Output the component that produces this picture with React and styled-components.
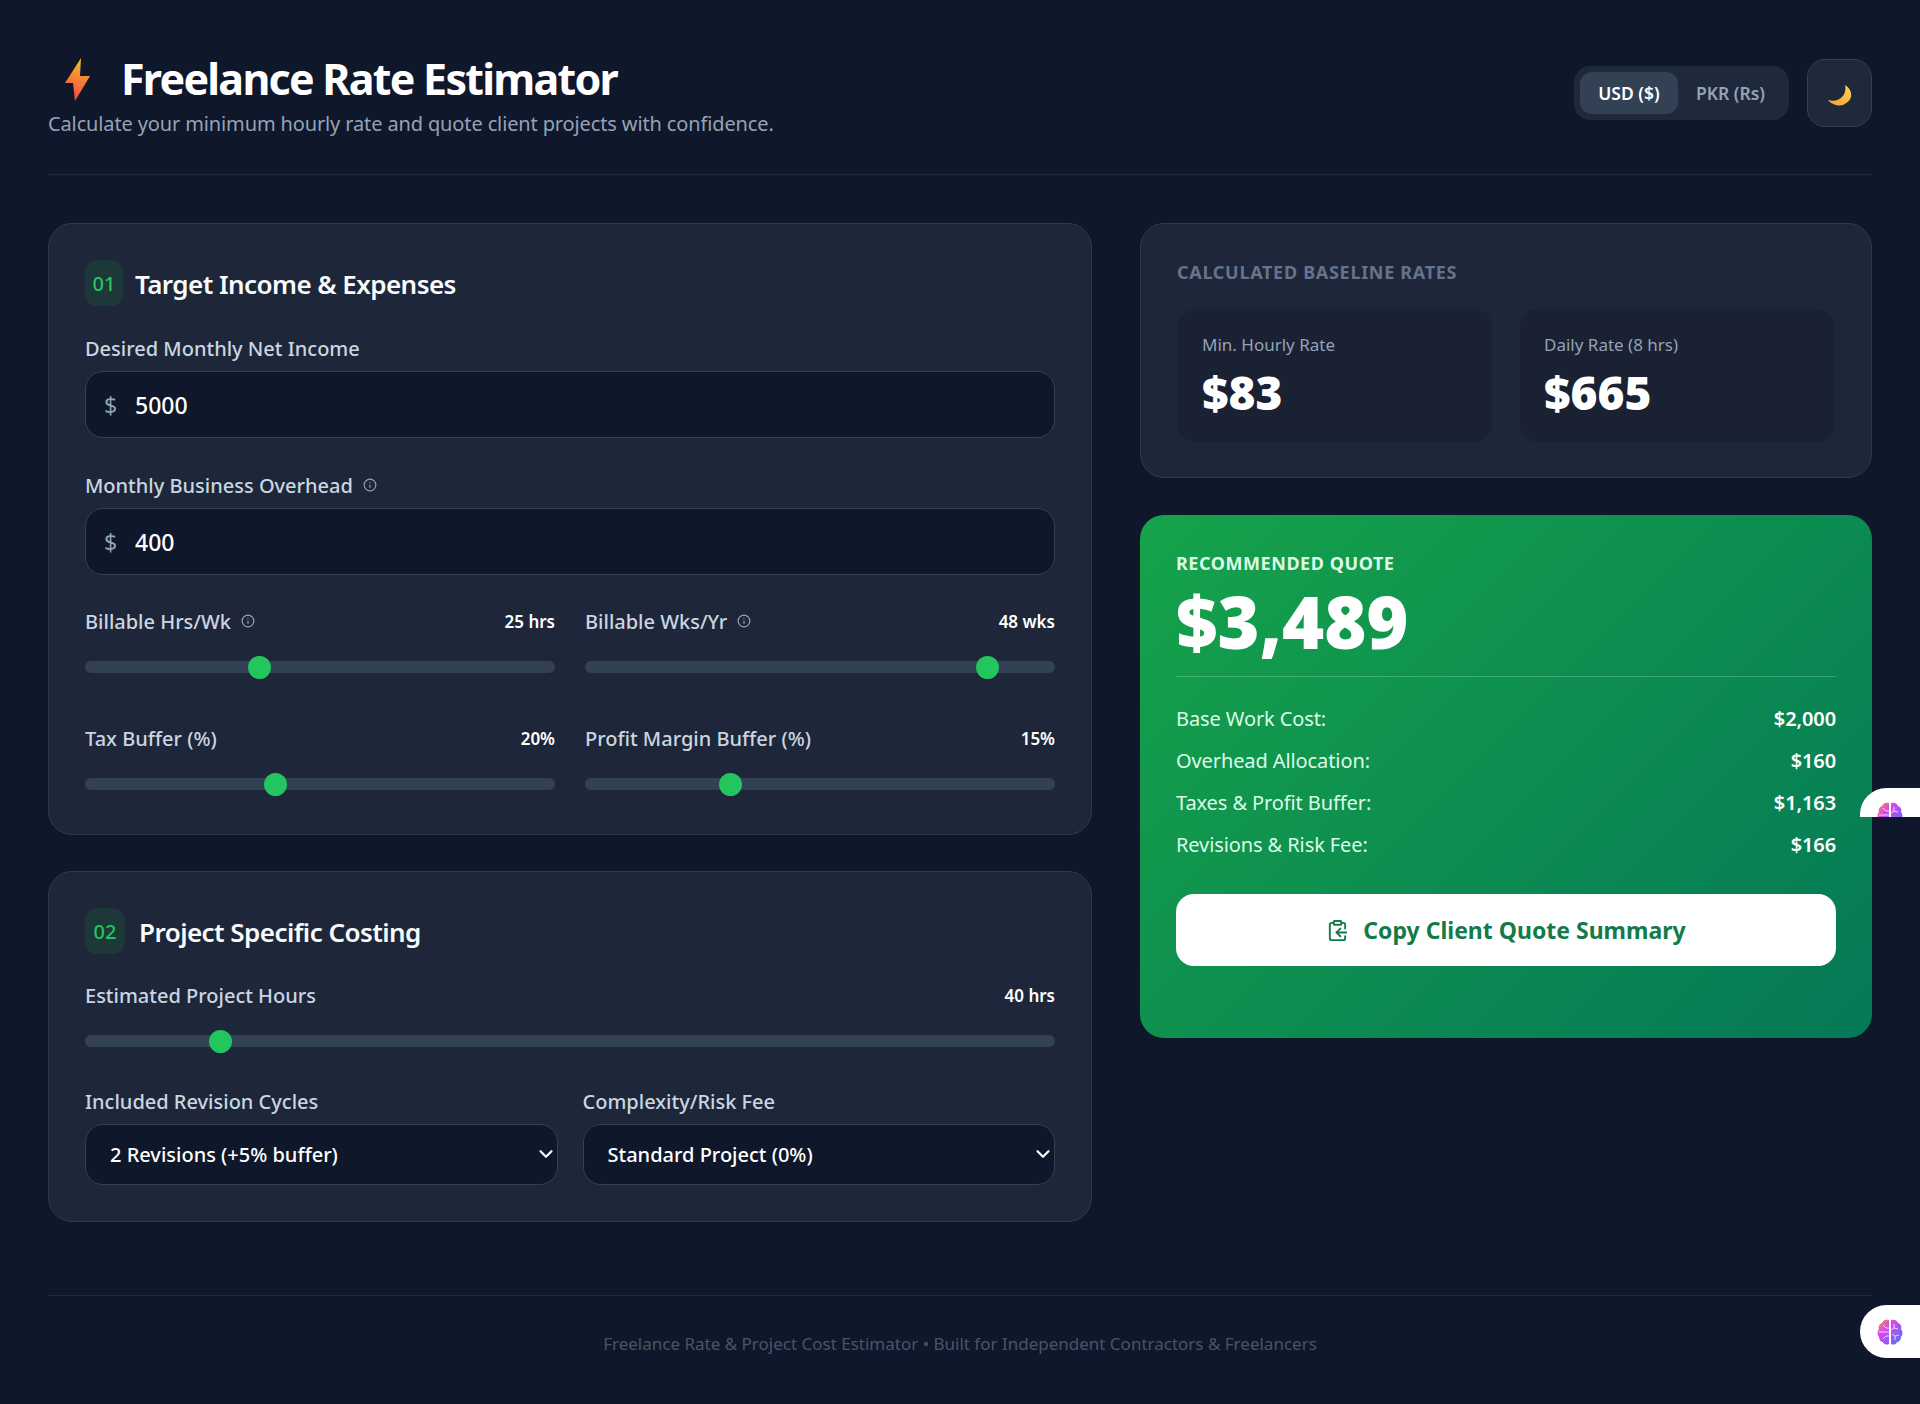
import React, { useState } from "react";
import styled, { createGlobalStyle } from "styled-components";
import { ClipboardCopy, Info, ChevronDown } from "lucide-react";

const GlobalStyle = createGlobalStyle`
  * { box-sizing: border-box; }
  body {
    margin: 0;
    background: #0f172a;
    color: #f8fafc;
    font-family: "Noto Sans", "Open Sans", sans-serif;
  }
`;

const Page = styled.div`
  position: relative;
  height: 1404px;
  padding: 48px 48px 0;
  overflow: hidden;
`;

const Header = styled.header`
  display: flex;
  justify-content: space-between;
  align-items: center;
  height: 127px;
  padding-bottom: 36px;
  border-bottom: 1px solid #1e293b;
  margin-bottom: 48px;
`;

const TitleRow = styled.div`
  display: flex;
  align-items: center;
  gap: 31px;
  padding-left: 17px;
  height: 60px;
`;

const Title = styled.h1`
  margin: -2px 0 0;
  font-size: 43px;
  font-weight: 700;
  letter-spacing: -1.75px;
  color: #fff;
`;

const Subtitle = styled.p`
  margin: 0;
  font-size: 20px;
  letter-spacing: -0.13px;
  color: #94a3b8;
`;

const Controls = styled.div`
  display: flex;
  align-items: center;
  gap: 18px;
`;

const Toggle = styled.div`
  display: flex;
  padding: 6px;
  height: 54px;
  border-radius: 16px;
  background: #1e293b;
`;

const ToggleBtn = styled.button`
  border: none;
  border-radius: 12px;
  height: 42px;
  width: ${(props) => (props.active ? "98px" : "105px")};
  font: 600 17.5px "Noto Sans", sans-serif;
  color: ${(props) => (props.active ? "#fff" : "#94a3b8")};
  background: ${(props) => (props.active ? "#334155" : "transparent")};
  cursor: pointer;
`;

const ThemeBtn = styled.button`
  width: 65px;
  height: 68px;
  display: flex;
  align-items: center;
  justify-content: center;
  padding: 5px 0 0;
  border-radius: 18px;
  border: 1px solid #334155;
  background: #1e293b;
  cursor: pointer;
`;

const Grid = styled.main`
  display: grid;
  grid-template-columns: 1044px 732px;
  justify-content: space-between;
  align-items: start;
`;

const Column = styled.div`
  display: flex;
  flex-direction: column;
  gap: ${(props) => props.gap}px;
`;

const Card = styled.section`
  height: ${(props) => props.h}px;
  padding: 36px;
  border-radius: 24px;
  background: #1d2739;
  border: 1px solid #2e3a4e;
`;

const CardHead = styled.div`
  display: flex;
  align-items: center;
  gap: ${(props) => props.gap || 12}px;
  height: 46px;
  margin-bottom: ${(props) => props.mb}px;
`;

const Badge = styled.span`
  display: flex;
  align-items: center;
  justify-content: center;
  width: ${(props) => props.w || 38}px;
  height: 46px;
  border-radius: 12px;
  background: #1c3838;
  color: #22c55e;
  font-size: 20px;
  font-weight: 500;
`;

const CardTitle = styled.h2`
  margin: 0;
  padding-top: 2px;
  font-size: 26px;
  font-weight: 600;
  letter-spacing: -0.55px;
  color: #f8fafc;
`;

const Field = styled.div`
  margin-bottom: ${(props) => props.mb || 0}px;
`;

const LabelRow = styled.div`
  display: flex;
  justify-content: space-between;
  align-items: center;
  height: 28px;
  margin-bottom: ${(props) => props.mb || 9}px;
`;

const Label = styled.label`
  display: flex;
  align-items: center;
  gap: 10px;
  font-size: 20px;
  font-weight: 500;
  color: #cbd5e1;
`;

const InfoIcon = styled(Info)`
  width: 14px;
  height: 14px;
  color: #94a3b8;
`;

const ValueText = styled.span`
  font-size: 17px;
  font-weight: 600;
  color: #fff;
`;

const InputBox = styled.div`
  display: flex;
  align-items: center;
  height: 67px;
  padding: 0 18px;
  border-radius: 18px;
  border: 1px solid #334155;
  background: #0f172a;
`;

const Prefix = styled.span`
  width: 29px;
  font-size: 23px;
  color: #94a3b8;
`;

const NumberInput = styled.input`
  flex: 1;
  border: none;
  outline: none;
  background: transparent;
  font: 500 23px "Noto Sans", sans-serif;
  color: #fff;
`;

const SliderGrid = styled.div`
  display: grid;
  grid-template-columns: 1fr 1fr;
  column-gap: 30px;
  row-gap: 45px;
`;

const Range = styled.input.attrs({ type: "range" })`
  display: block;
  width: 100%;
  height: 24px;
  margin: 0;
  appearance: none;
  background: transparent;
  &::-webkit-slider-runnable-track {
    height: 12px;
    border-radius: 6px;
    background: #334155;
  }
  &::-webkit-slider-thumb {
    appearance: none;
    width: 23px;
    height: 23px;
    margin-top: -5.5px;
    border-radius: 50%;
    background: #22c55e;
  }
`;

const SelectGrid = styled.div`
  display: grid;
  grid-template-columns: 1fr 1fr;
  column-gap: 25px;
  margin-top: 34px;
`;

const SelectBox = styled.div`
  position: relative;
`;

const Select = styled.select`
  display: block;
  width: 100%;
  height: 61px;
  padding: 0 24px;
  appearance: none;
  border-radius: 18px;
  border: 1px solid #334155;
  background: #0f172a;
  color: #fff;
  font: 500 20px "Noto Sans", sans-serif;
`;

const Chevron = styled(ChevronDown)`
  position: absolute;
  right: 1px;
  top: 19px;
  width: 22px;
  height: 22px;
  stroke-width: 2.4;
  color: #fff;
  pointer-events: none;
`;

const MutedHeading = styled.h3`
  margin: -1px 0 23px;
  height: 27px;
  line-height: 27px;
  font-size: 18px;
  font-weight: 700;
  letter-spacing: 0.7px;
  color: #64748b;
  text-transform: uppercase;
`;

const RateGrid = styled.div`
  display: grid;
  grid-template-columns: 1fr 1fr;
  gap: 28px;
  margin: 0 1px;
`;

const RateBox = styled.div`
  height: 133px;
  padding: 22px 24px;
  border-radius: 18px;
  background: #192133;
`;

const RateLabel = styled.div`
  font-size: 17px;
  color: #94a3b8;
  height: 28px;
  line-height: 28px;
`;

const RateValue = styled.div`
  margin-top: 3px;
  font-size: 46px;
  font-weight: 900;
  line-height: 60px;
  color: #fff;
`;

const QuoteCard = styled.section`
  height: 523px;
  padding: 36px;
  border-radius: 24px;
  background: linear-gradient(135deg, #16a34a, #047857);
`;

const QuoteLabel = styled.div`
  height: 24px;
  line-height: 24px;
  font-size: 18px;
  font-weight: 700;
  letter-spacing: 0.55px;
  color: #dcfce7;
  text-transform: uppercase;
`;

const QuoteValue = styled.div`
  height: 102px;
  line-height: 92px;
  padding-bottom: 18px;
  font-size: 72px;
  font-weight: 900;
  color: #fff;
  border-bottom: 1px solid rgba(255, 255, 255, 0.2);
`;

const Breakdown = styled.div`
  display: flex;
  flex-direction: column;
  gap: 14px;
  margin-top: 28px;
`;

const BreakRow = styled.div`
  display: flex;
  justify-content: space-between;
  height: 28px;
  line-height: 28px;
  font-size: 20px;
  letter-spacing: -0.1px;
  color: #dcfce7;
`;

const BreakValue = styled.span`
  font-weight: 600;
  color: #fff;
`;

const CopyBtn = styled.button`
  display: flex;
  align-items: center;
  justify-content: center;
  gap: 14px;
  width: 100%;
  height: 72px;
  margin-top: 35px;
  border: none;
  border-radius: 18px;
  background: #fff;
  color: #137a4a;
  font: 700 23px "Noto Sans", sans-serif;
  cursor: pointer;
`;

const Footer = styled.footer`
  margin-top: 73px;
  padding-top: 36px;
  border-top: 1px solid #1e293b;
  text-align: center;
  font-size: 17px;
  color: #475569;
`;

const BrainPill = styled.div`
  position: absolute;
  right: 0;
  left: 1860px;
  top: ${(props) => props.top}px;
  height: ${(props) => props.h}px;
  overflow: hidden;
`;

const BrainInner = styled.div`
  display: flex;
  align-items: center;
  padding-left: 16px;
  height: 53px;
  background: #fff;
  border-radius: 27px 0 0 27px;
`;

const Bolt = () => (
  <svg width="25" height="43" viewBox="0 0 25 43">
    <defs>
      <linearGradient id="boltFill" x1="0.6" y1="0" x2="0.4" y2="1">
        <stop offset="0" stopColor="#fbbf24" />
        <stop offset="1" stopColor="#ef4444" />
      </linearGradient>
    </defs>
    <polygon points="16,0 0,25 8,25 10,43 25,18 15,18" fill="url(#boltFill)" />
  </svg>
);

const Moon = () => (
  <svg width="24" height="21" viewBox="0 0 24 21">
    <defs>
      <linearGradient id="moonFill" x1="1" y1="0" x2="0" y2="1">
        <stop offset="0" stopColor="#fcd34d" />
        <stop offset="1" stopColor="#f59e3b" />
      </linearGradient>
    </defs>
    <path
      d="M17 0C22 3 24 8 23 12 21 18 14 22 8 20 5 19 2 18 0 15 6 17 11 15 14 12 17 9 18 5 17 0z"
      fill="url(#moonFill)"
    />
  </svg>
);

const Brain = ({ id }) => (
  <svg width="28" height="28" viewBox="0 0 28 28">
    <defs>
      <linearGradient id={id} x1="0" y1="0" x2="1" y2="1">
        <stop offset="0" stopColor="#fb923c" />
        <stop offset="0.35" stopColor="#d946ef" />
        <stop offset="0.7" stopColor="#8b5cf6" />
        <stop offset="1" stopColor="#3b82f6" />
      </linearGradient>
    </defs>
    <path
      d="M13 2C10 1 7 2 6 5 3 6 2 9 3 11c-2 2-2 6 0 8 0 3 2 5 4 5 1 3 4 3 6 2zM15 2c3-1 6 0 7 3 3 1 4 4 3 6 2 2 2 6 0 8 0 3-2 5-4 5-1 3-4 3-6 2z"
      fill={`url(#${id})`}
    />
    <path
      d="M3 14h10M7 7l3 3h3M7 21l3-3h3M18 6v4l-3 2M18 10l4 1M19 22v-4l-3-2M19 18l4-1"
      fill="none"
      stroke="#fff"
      strokeOpacity="0.75"
      strokeWidth="1"
    />
  </svg>
);

function SliderField({ label, info, value, min, max, current }) {
  return (
    <Field>
      <LabelRow mb={20}>
        <Label>
          {label}
          {info && <InfoIcon />}
        </Label>
        <ValueText>{value}</ValueText>
      </LabelRow>
      <Range min={min} max={max} defaultValue={current} />
    </Field>
  );
}

function App() {
  const [currency, setCurrency] = useState("usd");

  return (
    <Page>
      <GlobalStyle />
      <Header>
        <div>
          <TitleRow>
            <Bolt />
            <Title>Freelance Rate Estimator</Title>
          </TitleRow>
          <Subtitle>
            Calculate your minimum hourly rate and quote client projects with confidence.
          </Subtitle>
        </div>
        <Controls>
          <Toggle>
            <ToggleBtn active={currency === "usd"} onClick={() => setCurrency("usd")}>
              USD ($)
            </ToggleBtn>
            <ToggleBtn active={currency === "pkr"} onClick={() => setCurrency("pkr")}>
              PKR (Rs)
            </ToggleBtn>
          </Toggle>
          <ThemeBtn aria-label="Toggle theme">
            <Moon />
          </ThemeBtn>
        </Controls>
      </Header>

      <Grid>
        <Column gap={36}>
          <Card h={612}>
            <CardHead mb={28}>
              <Badge>01</Badge>
              <CardTitle>Target Income &amp; Expenses</CardTitle>
            </CardHead>
            <Field mb={33}>
              <LabelRow>
                <Label>Desired Monthly Net Income</Label>
              </LabelRow>
              <InputBox>
                <Prefix>$</Prefix>
                <NumberInput defaultValue="5000" />
              </InputBox>
            </Field>
            <Field mb={32}>
              <LabelRow>
                <Label>
                  Monthly Business Overhead
                  <InfoIcon />
                </Label>
              </LabelRow>
              <InputBox>
                <Prefix>$</Prefix>
                <NumberInput defaultValue="400" />
              </InputBox>
            </Field>
            <SliderGrid>
              <SliderField label="Billable Hrs/Wk" info value="25 hrs" min={5} max={60} current={25} />
              <SliderField label="Billable Wks/Yr" info value="48 wks" min={20} max={52} current={48} />
              <SliderField label="Tax Buffer (%)" value="20%" min={0} max={50} current={20} />
              <SliderField label="Profit Margin Buffer (%)" value="15%" min={0} max={50} current={15} />
            </SliderGrid>
          </Card>

          <Card h={351}>
            <CardHead gap={14} mb={27}>
              <Badge w={40}>02</Badge>
              <CardTitle>Project Specific Costing</CardTitle>
            </CardHead>
            <SliderField label="Estimated Project Hours" value="40 hrs" min={10} max={240} current={40} />
            <SelectGrid>
              <Field>
                <LabelRow>
                  <Label>Included Revision Cycles</Label>
                </LabelRow>
                <SelectBox>
                  <Select defaultValue="2">
                    <option value="1">1 Revision (+0% buffer)</option>
                    <option value="2">2 Revisions (+5% buffer)</option>
                    <option value="3">3 Revisions (+10% buffer)</option>
                  </Select>
                  <Chevron />
                </SelectBox>
              </Field>
              <Field>
                <LabelRow>
                  <Label>Complexity/Risk Fee</Label>
                </LabelRow>
                <SelectBox>
                  <Select defaultValue="0">
                    <option value="0">Standard Project (0%)</option>
                    <option value="10">Complex Project (10%)</option>
                  </Select>
                  <Chevron />
                </SelectBox>
              </Field>
            </SelectGrid>
          </Card>
        </Column>

        <Column gap={37}>
          <Card h={255}>
            <MutedHeading>Calculated Baseline Rates</MutedHeading>
            <RateGrid>
              <RateBox>
                <RateLabel>Min. Hourly Rate</RateLabel>
                <RateValue>$83</RateValue>
              </RateBox>
              <RateBox>
                <RateLabel>Daily Rate (8 hrs)</RateLabel>
                <RateValue>$665</RateValue>
              </RateBox>
            </RateGrid>
          </Card>

          <QuoteCard>
            <QuoteLabel>Recommended Quote</QuoteLabel>
            <QuoteValue>$3,489</QuoteValue>
            <Breakdown>
              <BreakRow>
                <span>Base Work Cost:</span>
                <BreakValue>$2,000</BreakValue>
              </BreakRow>
              <BreakRow>
                <span>Overhead Allocation:</span>
                <BreakValue>$160</BreakValue>
              </BreakRow>
              <BreakRow>
                <span>Taxes &amp; Profit Buffer:</span>
                <BreakValue>$1,163</BreakValue>
              </BreakRow>
              <BreakRow>
                <span>Revisions &amp; Risk Fee:</span>
                <BreakValue>$166</BreakValue>
              </BreakRow>
            </Breakdown>
            <CopyBtn>
              <ClipboardCopy size={23} />
              Copy Client Quote Summary
            </CopyBtn>
          </QuoteCard>
        </Column>
      </Grid>

      <Footer>Freelance Rate &amp; Project Cost Estimator • Built for Independent Contractors &amp; Freelancers</Footer>

      <BrainPill top={788} h={29}>
        <BrainInner>
          <Brain id="brainTop" />
        </BrainInner>
      </BrainPill>
      <BrainPill top={1305} h={53}>
        <BrainInner>
          <Brain id="brainBottom" />
        </BrainInner>
      </BrainPill>
    </Page>
  );
}

export default App;
